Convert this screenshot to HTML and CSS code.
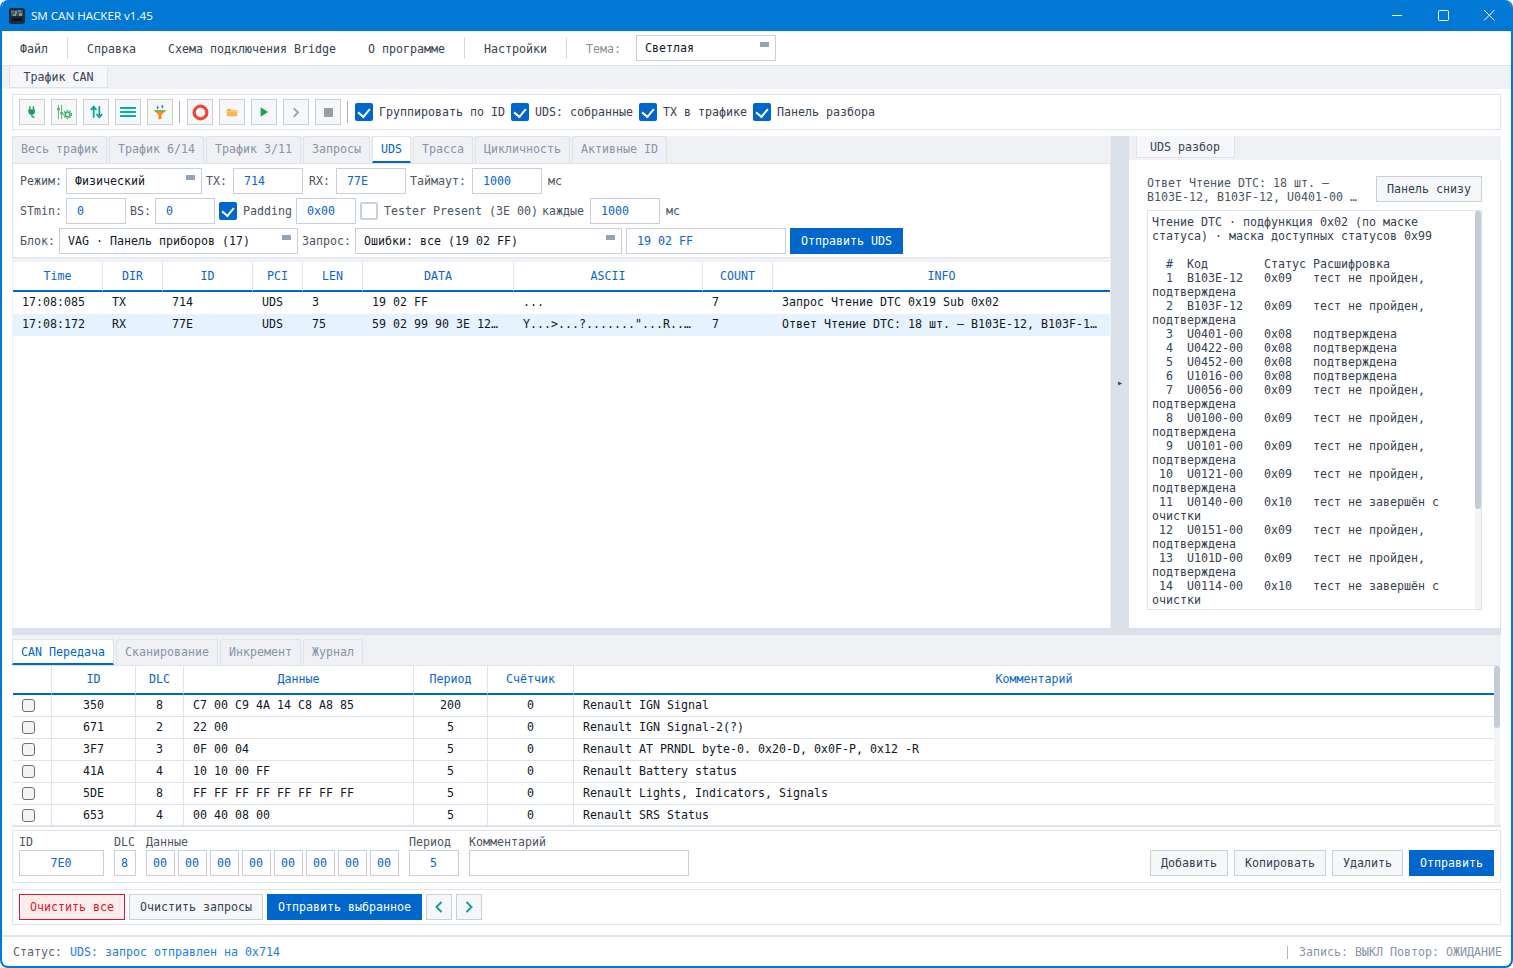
FILE: index.html
```html
<!DOCTYPE html>
<html lang="ru">
<head>
    <meta charset="UTF-8">
    <title>SM CAN HACKER v1.45</title>
    <link rel="stylesheet" href="styles.css">
</head>
<body>
    <div class="window">
        <!-- Title bar -->
        <div class="titlebar">
            <svg class="logo" width="16" height="16" viewBox="0 0 16 16">
                <rect width="16" height="16" rx="3" fill="#1c2a3d"/>
                <rect x="2" y="2" width="12" height="6" fill="#37507a"/>
                <rect x="2" y="3" width="3" height="2" fill="#c0483c"/>
                <rect x="6" y="3" width="2" height="3" fill="#4caf62"/>
                <rect x="9" y="2" width="3" height="2" fill="#3f8fd8"/>
                <rect x="4" y="6" width="3" height="2" fill="#58b368"/>
                <rect x="10" y="5" width="3" height="3" fill="#b58b3c"/>
                <rect x="3" y="10" width="10" height="3" rx="1" fill="#0d1522"/>
            </svg>
            <span class="app-title">SM CAN HACKER v1.45</span>
            <div class="caption">
                <svg width="46" height="31" viewBox="0 0 46 31"><path d="M18 15.5h10" stroke="#fff" fill="none"/></svg>
                <svg width="46" height="31" viewBox="0 0 46 31"><rect x="18.500" y="10.500" width="10" height="10" rx="1" stroke="#fff" fill="none"/></svg>
                <svg width="46" height="31" viewBox="0 0 46 31"><path d="M18 10l10.500 10.500M28.500 10L18 20.500" stroke="#fff" fill="none"/></svg>
            </div>
        </div>

        <!-- Menu -->
        <div class="menubar">
            <span class="menu-item m-file">Файл</span>
            <span class="menu-sep"></span>
            <span class="menu-item m-help">Справка</span>
            <span class="menu-item m-bridge">Схема подключения Bridge</span>
            <span class="menu-item m-about">О программе</span>
            <span class="menu-sep"></span>
            <span class="menu-item m-settings">Настройки</span>
            <span class="menu-sep"></span>
            <span class="menu-label">Тема:</span>
            <div class="combo w-theme"><span>Светлая</span><i></i></div>
        </div>

        <div class="page-tabs">
            <div class="page-tab">Трафик CAN</div>
        </div>

        <div class="main">
            <!-- Toolbar -->
            <div class="panel toolbar">
                <button class="tool"><svg width="10" height="14" viewBox="0 0 14 18"><path d="M4 1v4M9 1v4" stroke="#17a05d" stroke-width="2" fill="none"/><path d="M2 5h9v4a4 4 0 0 1-3 4H5a4 4 0 0 1-3-4z" fill="#17a05d"/><path d="M6.500 13c0 3 2 3.500 4 3.500" stroke="#17a05d" stroke-width="1.800" fill="none"/></svg></button>
                <button class="tool"><svg width="16" height="16" viewBox="0 0 20 20"><path d="M3 1v18M7 1v18" stroke="#5dbb7a" stroke-width="1.300" fill="none"/><rect x="1.500" y="5" width="3" height="3" fill="#3fae66"/><rect x="5.500" y="10" width="3" height="3" fill="#3fae66"/><circle cx="14.500" cy="13" r="3" fill="none" stroke="#3fae66" stroke-width="2"/><circle cx="14.500" cy="13" r="5" fill="none" stroke="#3fae66" stroke-width="1.400" stroke-dasharray="1.800 1.800"/></svg></button>
                <button class="tool"><svg width="13" height="14" viewBox="0 0 16 16"><path d="M4.500 15V2M1 5.500l3.500-4 3.500 4M11.500 1v13M8 10.500l3.500 4 3.500-4" stroke="#0ea593" stroke-width="2.200" fill="none"/></svg></button>
                <button class="tool"><svg width="16" height="10" viewBox="0 0 16 10"><path d="M0 1h16M0 5h16M0 9h16" stroke="#12ad9a" stroke-width="1.800" fill="none"/></svg></button>
                <button class="tool"><svg width="14" height="17" viewBox="0 0 18 20"><path d="M6 1v4M4.500 3.500L6 5l1.500-1.500M12 5V1M10.500 2.500L12 1l1.500 1.500" stroke="#1f6fd0" stroke-width="1.200" fill="none"/><path d="M1 7h16l-6 6v5l-4 1v-6z" fill="#f58a1f"/><path d="M1 7h16l-2 2H3z" fill="#6fae5f"/></svg></button>
                <span class="tool-sep"></span>
                <button class="tool"><svg width="17" height="17" viewBox="0 0 18 18"><circle cx="9" cy="9" r="6.700" fill="none" stroke="#f2463a" stroke-width="3.400"/></svg></button>
                <button class="tool"><svg width="12" height="9" viewBox="0 0 16 12"><path d="M1 1h5l1.500 2H15v8H1z" fill="#f8b653"/><path d="M1 4h14v1H1z" fill="#fbd08b"/></svg></button>
                <button class="tool"><svg width="8" height="10" viewBox="0 0 12 14"><path d="M1 0l11 7-11 7z" fill="#16a34a"/></svg></button>
                <button class="tool"><svg width="8" height="11" viewBox="0 0 12 16"><path d="M2.500 1.500L9 8l-6.500 6.500" stroke="#a3a7ad" stroke-width="3" fill="none"/></svg></button>
                <button class="tool"><svg width="9" height="9" viewBox="0 0 10 10"><rect width="10" height="10" rx="1" fill="#9c9c9c"/></svg></button>
                <span class="tool-sep"></span>
                <label class="chk on"></label><span class="chk-text t-group">Группировать по ID</span>
                <label class="chk on"></label><span class="chk-text t-uds">UDS: собранные</span>
                <label class="chk on"></label><span class="chk-text t-tx">TX в трафике</span>
                <label class="chk on"></label><span class="chk-text">Панель разбора</span>
            </div>

            <!-- Upper split -->
            <div class="split">
                <div class="left-pane">
                    <div class="tabs">
                        <div class="tab">Весь трафик</div>
                        <div class="tab">Трафик 6/14</div>
                        <div class="tab">Трафик 3/11</div>
                        <div class="tab">Запросы</div>
                        <div class="tab active">UDS</div>
                        <div class="tab">Трасса</div>
                        <div class="tab">Цикличность</div>
                        <div class="tab">Активные ID</div>
                    </div>
                    <div class="uds-form">
                        <div class="form-row">
                            <span class="lbl">Режим:</span>
                            <div class="combo w-mode"><span>Физический</span><i></i></div>
                            <span class="lbl">TX:</span><span class="field f70 ml2">714</span>
                            <span class="lbl ml2">RX:</span><span class="field f70 ml2">77E</span>
                            <span class="lbl">Таймаут:</span><span class="field f70 ml2">1000</span>
                            <span class="lbl ml2">мс</span>
                        </div>
                        <div class="form-row">
                            <span class="lbl">STmin:</span><span class="field f60">0</span>
                            <span class="lbl">BS:</span><span class="field f60">0</span>
                            <label class="chk on"></label><span class="lbl ml2">Padding</span>
                            <span class="field f60">0x00</span>
                            <label class="chk"></label><span class="lbl ml2">Tester Present (3E 00)<span class="every"> каждые</span></span>
                            <span class="field f70 ml2">1000</span>
                            <span class="lbl ml2">мс</span>
                        </div>
                        <div class="form-row">
                            <span class="lbl">Блок:</span>
                            <div class="combo w-block"><span>VAG · Панель приборов (17)</span><i></i></div>
                            <span class="lbl">Запрос:</span>
                            <div class="combo w-query"><span>Ошибки: все (19 02 FF)</span><i></i></div>
                            <span class="field f160">19 02 FF</span>
                            <button class="btn primary w-send-uds">Отправить UDS</button>
                        </div>
                    </div>
                    <div class="traffic-wrap">
                        <table class="grid traffic">
                            <colgroup>
                                <col class="c90"><col class="c60"><col class="c90"><col class="c50"><col class="c60"><col class="c151"><col class="c189"><col class="c70"><col class="c337">
                            </colgroup>
                            <thead>
                                <tr><th>Time</th><th>DIR</th><th>ID</th><th>PCI</th><th>LEN</th><th>DATA</th><th>ASCII</th><th>COUNT</th><th>INFO</th></tr>
                            </thead>
                            <tbody>
                                <tr><td>17:08:085</td><td>TX</td><td>714</td><td>UDS</td><td>3</td><td>19 02 FF</td><td>...</td><td>7</td><td>Запрос Чтение DTC 0x19 Sub 0x02</td></tr>
                                <tr class="selected"><td>17:08:172</td><td>RX</td><td>77E</td><td>UDS</td><td>75</td><td>59 02 99 90 3E 12…</td><td>Y...&gt;...?......."...R..…</td><td>7</td><td>Ответ Чтение DTC: 18 шт. — B103E-12, B103F-1…</td></tr>
                            </tbody>
                        </table>
                    </div>
                </div>

                <div class="v-splitter"><span>▸</span></div>

                <div class="right-pane">
                    <div class="right-tabs"><div class="right-tab">UDS разбор</div></div>
                    <div class="right-body">
                        <div class="summary">
                            <div class="summary-text">Ответ Чтение DTC: 18 шт. —<br>B103E-12, B103F-12, U0401-00 …</div>
                            <button class="btn w-panel">Панель снизу</button>
                        </div>
                        <div class="decode">
<pre class="decode-text">Чтение DTC · подфункция 0x02 (по маске
статуса) · маска доступных статусов 0x99

  #  Код        Статус Расшифровка
  1  B103E-12   0x09   тест не пройден,
подтверждена
  2  B103F-12   0x09   тест не пройден,
подтверждена
  3  U0401-00   0x08   подтверждена
  4  U0422-00   0x08   подтверждена
  5  U0452-00   0x08   подтверждена
  6  U1016-00   0x08   подтверждена
  7  U0056-00   0x09   тест не пройден,
подтверждена
  8  U0100-00   0x09   тест не пройден,
подтверждена
  9  U0101-00   0x09   тест не пройден,
подтверждена
 10  U0121-00   0x09   тест не пройден,
подтверждена
 11  U0140-00   0x10   тест не завершён с
очистки
 12  U0151-00   0x09   тест не пройден,
подтверждена
 13  U101D-00   0x09   тест не пройден,
подтверждена
 14  U0114-00   0x10   тест не завершён с
очистки</pre>
                            <div class="scroll decode-scroll"><div class="thumb"></div></div>
                        </div>
                    </div>
                </div>
            </div>

            <div class="h-splitter"></div>

            <!-- Lower tabs -->
            <div class="tabs lower-tabs">
                <div class="tab active">CAN Передача</div>
                <div class="tab">Сканирование</div>
                <div class="tab">Инкремент</div>
                <div class="tab">Журнал</div>
            </div>
            <div class="tx-wrap">
                <table class="grid tx">
                    <colgroup>
                        <col class="c39"><col class="c84"><col class="c48"><col class="c230"><col class="c74"><col class="c86"><col>
                    </colgroup>
                    <thead>
                        <tr><th></th><th>ID</th><th>DLC</th><th>Данные</th><th>Период</th><th>Счётчик</th><th>Комментарий</th></tr>
                    </thead>
                    <tbody>
                        <tr><td class="pick"><span class="row-check"></span></td><td class="mid">350</td><td class="mid">8</td><td>C7 00 C9 4A 14 C8 A8 85</td><td class="mid">200</td><td class="mid">0</td><td>Renault IGN Signal</td></tr>
                        <tr><td class="pick"><span class="row-check"></span></td><td class="mid">671</td><td class="mid">2</td><td>22 00</td><td class="mid">5</td><td class="mid">0</td><td>Renault IGN Signal-2(?)</td></tr>
                        <tr><td class="pick"><span class="row-check"></span></td><td class="mid">3F7</td><td class="mid">3</td><td>0F 00 04</td><td class="mid">5</td><td class="mid">0</td><td>Renault AT PRNDL byte-0. 0x20-D, 0x0F-P, 0x12 -R</td></tr>
                        <tr><td class="pick"><span class="row-check"></span></td><td class="mid">41A</td><td class="mid">4</td><td>10 10 00 FF</td><td class="mid">5</td><td class="mid">0</td><td>Renault Battery status</td></tr>
                        <tr><td class="pick"><span class="row-check"></span></td><td class="mid">5DE</td><td class="mid">8</td><td>FF FF FF FF FF FF FF FF</td><td class="mid">5</td><td class="mid">0</td><td>Renault Lights, Indicators, Signals</td></tr>
                        <tr><td class="pick"><span class="row-check"></span></td><td class="mid">653</td><td class="mid">4</td><td>00 40 08 00</td><td class="mid">5</td><td class="mid">0</td><td>Renault SRS Status</td></tr>
                    </tbody>
                </table>
                <div class="scroll tx-scroll"><div class="thumb"></div></div>
            </div>

            <!-- Frame editor -->
            <div class="panel editor">
                <div class="ed-group">
                    <span class="ed-label">ID</span>
                    <span class="field center e85">7E0</span>
                </div>
                <div class="ed-group">
                    <span class="ed-label">DLC</span>
                    <span class="field center e22">8</span>
                </div>
                <div class="ed-group">
                    <span class="ed-label">Данные</span>
                    <div class="bytes">
                        <span class="field center e29">00</span>
                        <span class="field center e29">00</span>
                        <span class="field center e29">00</span>
                        <span class="field center e29">00</span>
                        <span class="field center e29">00</span>
                        <span class="field center e29">00</span>
                        <span class="field center e29">00</span>
                        <span class="field center e29">00</span>
                    </div>
                </div>
                <div class="ed-group">
                    <span class="ed-label">Период</span>
                    <span class="field center e50">5</span>
                </div>
                <div class="ed-group">
                    <span class="ed-label">Комментарий</span>
                    <span class="field e220"></span>
                </div>
                <div class="ed-buttons">
                    <button class="btn w-add">Добавить</button>
                    <button class="btn w-copy">Копировать</button>
                    <button class="btn w-del">Удалить</button>
                    <button class="btn primary w-tx">Отправить</button>
                </div>
            </div>

            <!-- Actions -->
            <div class="panel actions">
                <button class="btn danger w-clear">Очистить все</button>
                <button class="btn w-clear-req">Очистить запросы</button>
                <button class="btn primary w-send-sel">Отправить выбранное</button>
                <button class="btn nav"><svg width="10" height="12" viewBox="0 0 10 12"><path d="M7.500 1L2.500 6l5 5" stroke="#0ea593" stroke-width="2" fill="none"/></svg></button>
                <button class="btn nav"><svg width="10" height="12" viewBox="0 0 10 12"><path d="M2.500 1l5 5-5 5" stroke="#0ea593" stroke-width="2" fill="none"/></svg></button>
            </div>
        </div>

        <!-- Status -->
        <div class="statusbar">
            <span class="st-label">Статус:</span>
            <span class="st-value">UDS: запрос отправлен на 0x714</span>
            <span class="st-right">Запись: ВЫКЛ Повтор: ОЖИДАНИЕ</span>
        </div>
    </div>
</body>
</html>
```

FILE: styles.css
```css
* {
    margin: 0;
    padding: 0;
    box-sizing: border-box;
}

body {
    font-family: 'DejaVu Sans Mono', 'Liberation Mono', monospace;
    font-size: 11.63px;
    color: #1f2937;
    background: #fff;
    overflow: hidden;
}

button {
    font: inherit;
    cursor: default;
}

.window {
    width: 1513px;
    height: 968px;
    display: flex;
    flex-direction: column;
    background: #fff;
    border: 2px solid #0078d4;
    border-top: 0;
    border-radius: 8px;
    overflow: hidden;
}

/* title bar */
.titlebar {
    height: 31px;
    margin: 0 -2px;
    flex: none;
    display: flex;
    align-items: center;
    padding-left: 9px;
    background: #0078d4;
    color: #fff;
}

.logo {
    margin-right: 6px;
}

.app-title {
    font-family: 'Open Sans', 'Noto Sans', sans-serif;
    font-size: 11.6px;
}

.caption {
    margin-left: auto;
    margin-right: 1px;
    display: flex;
}

/* menu */
.menubar {
    height: 35px;
    flex: none;
    display: flex;
    align-items: center;
    border-bottom: 1px solid #dfe3ea;
    color: #374151;
}

.menu-item {
    padding-top: 2px;
}

.m-file { margin-left: 18px; }
.m-help { margin-left: 19px; }
.m-bridge { margin-left: 32px; }
.m-about { margin-left: 32px; }
.m-settings { margin-left: 19px; }

.menu-sep {
    width: 1px;
    height: 21px;
    margin-left: 19px;
    background: #d3d8e0;
}

.menu-label {
    margin-left: 19px;
    padding-top: 2px;
    color: #8b8f96;
}

.combo {
    height: 26px;
    display: flex;
    justify-content: space-between;
    padding: 0 6px 0 8px;
    line-height: 24px;
    background: #fff;
    border: 1px solid #c8d0dc;
    color: #111827;
}

.combo i {
    width: 9px;
    height: 5px;
    margin-top: 6px;
    background: #94a3b8;
}

.w-theme { width: 140px; margin-left: 15px; }
.w-mode { width: 136px; }
.w-block { width: 239px; }
.w-query { width: 267px; }

.page-tabs {
    height: 23px;
    flex: none;
    padding-left: 7px;
    background: #eff1f5;
}

.page-tab {
    width: 99px;
    height: 22px;
    line-height: 23px;
    text-align: center;
    background: #f6f7fa;
    border: 1px solid #dfe3ea;
    border-top: 0;
    color: #374151;
}

.main {
    flex: 1;
    padding: 5px 10px 0;
    display: flex;
    flex-direction: column;
}

.panel {
    background: #fff;
    border: 1px solid #dfe3ea;
    display: flex;
}

/* toolbar */
.toolbar {
    height: 36px;
    flex: none;
    align-items: center;
    padding-left: 6px;
}

.tool {
    width: 26px;
    height: 26px;
    margin-right: 6px;
    display: flex;
    align-items: center;
    justify-content: center;
    background: #f6f7f9;
    border: 1px solid #c8d0dc;
}

.tool-sep {
    width: 1px;
    height: 22px;
    margin-right: 7px;
    background: #a9adb3;
}

.chk {
    width: 18px;
    height: 18px;
    flex: none;
    display: block;
    position: relative;
    background: #fff;
    border: 2px solid #c8d0dc;
    border-radius: 2px;
}

.chk.on {
    background: #0066cc;
    border-color: #0066cc;
}

.chk.on::after {
    content: "";
    position: absolute;
    left: 3px;
    top: 1px;
    width: 6px;
    height: 9px;
    border: solid #fff;
    border-width: 0 2px 2px 0;
    transform: rotate(40deg);
}

.chk-text {
    margin-left: 6px;
    color: #374151;
}

.t-group { margin-right: 6px; }
.t-uds { margin-right: 6px; }
.t-tx { margin-right: 6px; }

/* upper split */
.split {
    height: 492px;
    flex: none;
    margin-top: 6px;
    display: flex;
}

.left-pane {
    width: 1099px;
    display: flex;
    flex-direction: column;
    background: #eff1f5;
}

.tabs {
    height: 27px;
    flex: none;
    display: flex;
    gap: 2px;
    background: #eff1f5;
}

.tab {
    padding: 0 8px;
    line-height: 24px;
    white-space: nowrap;
    color: #8a94a6;
    background: #eff1f5;
    border: 1px solid #dfe3ea;
    border-bottom: 0;
    border-radius: 3px 3px 0 0;
}

.tab.active {
    color: #0066cc;
    background: #fff;
    border-bottom: 2px solid #0066cc;
}

.uds-form {
    height: 95px;
    flex: none;
    padding: 4px 0 0 7px;
    display: flex;
    flex-direction: column;
    gap: 4px;
    background: #fff;
    border: 1px solid #dfe3ea;
}

.form-row {
    height: 26px;
    display: flex;
    align-items: center;
    gap: 4px;
}

.lbl {
    color: #4b5563;
    white-space: nowrap;
}

.every {
    margin-left: -3px;
}

.ml2 { margin-left: 2px; }

.field {
    height: 26px;
    flex: none;
    display: block;
    padding-left: 10px;
    line-height: 24px;
    color: #0a66c8;
    background: #fff;
    border: 1px solid #c8d0dc;
}

.center {
    padding: 0 1px 0 0;
    text-align: center;
}

.f60 { width: 60px; }
.f70 { width: 70px; }
.f160 { width: 160px; }

.btn {
    height: 26px;
    flex: none;
    color: #374151;
    background: #f6f7f9;
    border: 1px solid #c8d0dc;
}

.btn.primary {
    color: #fff;
    background: #0066cc;
    border-color: #0066cc;
}

.btn.danger {
    color: #d9182d;
    background: #fdecec;
    border-color: #d9182d;
}

.btn.nav {
    width: 26px;
    display: flex;
    align-items: center;
    justify-content: center;
}

.w-send-uds { width: 113px; }

/* tables */
.traffic-wrap {
    flex: 1;
    margin: 4px 1px 0;
    background: #fff;
}

.grid {
    border-collapse: separate;
    border-spacing: 0;
    table-layout: fixed;
}

.grid th {
    padding-bottom: 1px;
    font-weight: normal;
    color: #0a66c8;
    text-align: center;
    border-right: 1px solid #dfe3ea;
    border-bottom: 2px solid #0066cc;
}

.grid td {
    height: 22px;
    padding: 0 0 2px 9px;
    white-space: nowrap;
    overflow: hidden;
    color: #111827;
}

.traffic {
    width: 1097px;
}

.traffic th {
    height: 30px;
}

.traffic th:last-child,
.tx th:last-child {
    border-right: 0;
}

.traffic .selected td {
    background: #e6f2fd;
}

.c39 { width: 39px; }
.c48 { width: 48px; }
.c50 { width: 50px; }
.c60 { width: 60px; }
.c70 { width: 70px; }
.c74 { width: 74px; }
.c84 { width: 84px; }
.c86 { width: 86px; }
.c90 { width: 90px; }
.c151 { width: 151px; }
.c189 { width: 189px; }
.c230 { width: 230px; }
.c337 { width: 337px; }

.v-splitter {
    width: 18px;
    flex: none;
    display: flex;
    align-items: center;
    justify-content: center;
    background: #dce0e8;
    color: #3f4650;
    font-size: 10px;
}

/* right pane */
.right-pane {
    flex: 1;
    display: flex;
    flex-direction: column;
}

.right-tabs {
    height: 24px;
    flex: none;
    padding-left: 7px;
    background: #eff1f5;
}

.right-tab {
    width: 99px;
    height: 22px;
    padding-left: 13px;
    line-height: 22px;
    color: #374151;
    background: #f6f7fa;
    border: 1px solid #dfe3ea;
    border-top: 0;
}

.right-body {
    flex: 1;
    padding: 16px 18px 0;
    background: #fff;
    border-right: 1px solid #dfe3ea;
}

.summary {
    height: 34px;
    display: flex;
    justify-content: space-between;
}

.summary-text {
    line-height: 14px;
    color: #4b5563;
}

.w-panel { width: 106px; }

.decode {
    width: 335px;
    height: 400px;
    display: flex;
    overflow: hidden;
    border: 1px solid #dfe3ea;
}

.decode-text {
    width: 327px;
    flex: none;
    padding: 4px 0 0 4px;
    font: inherit;
    line-height: 14px;
    color: #374151;
}

.scroll {
    flex: none;
    background: #f3f4f6;
}

.thumb {
    background: #c4ccd8;
    border-radius: 3px;
}

.decode-scroll { width: 6px; }
.decode-scroll .thumb { height: 298px; }

.h-splitter {
    height: 7px;
    flex: none;
    background: #dce0e8;
}

/* lower tabs and send table */
.lower-tabs {
    height: 30px;
    padding-top: 4px;
}

.lower-tabs .tab {
    line-height: 25px;
}

.tx-wrap {
    height: 162px;
    flex: none;
    display: flex;
    padding-left: 1px;
    overflow: hidden;
    background: #fff;
    border-top: 1px solid #dfe3ea;
    border-bottom: 2px solid #dfe3ea;
}

.tx {
    width: 1481px;
    flex: none;
    align-self: flex-start;
}

.tx th {
    height: 29px;
}

.tx td {
    border-right: 1px solid #dfe3ea;
    border-bottom: 1px solid #dfe3ea;
}

.tx td:last-child {
    border-right: 0;
}

.tx td.mid {
    padding: 0 0 2px;
    text-align: center;
}

.tx td.pick {
    padding-bottom: 0;
}

.row-check {
    display: block;
    width: 13px;
    height: 13px;
    background: #f4f4f4;
    border: 1px solid #6f6f6f;
    border-radius: 3px;
}

.tx-scroll { width: 6px; }
.tx-scroll .thumb { height: 62px; }

/* frame editor */
.editor {
    height: 53px;
    flex: none;
    margin-top: 3px;
    padding: 4px 6px 0;
    gap: 10px;
}

.ed-group {
    display: flex;
    flex-direction: column;
}

.ed-label {
    height: 15px;
    line-height: 15px;
    color: #4b5563;
    white-space: nowrap;
}

.bytes {
    display: flex;
    gap: 3px;
}

.e22 { width: 22px; }
.e29 { width: 29px; }
.e50 { width: 50px; }
.e85 { width: 85px; }
.e220 { width: 220px; }

.ed-buttons {
    margin-left: auto;
    padding-top: 15px;
    display: flex;
    gap: 6px;
}

.w-add { width: 78px; }
.w-copy { width: 92px; }
.w-del { width: 71px; }
.w-tx { width: 85px; }

/* actions */
.actions {
    height: 36px;
    flex: none;
    margin-top: 6px;
    padding-left: 6px;
    align-items: center;
    gap: 4px;
}

.w-clear { width: 106px; }
.w-clear-req { width: 134px; }
.w-send-sel { width: 155px; }

/* status */
.statusbar {
    height: 31px;
    flex: none;
    display: flex;
    align-items: center;
    padding: 0 9px 0 11px;
    border-top: 2px solid #dfe3ea;
}

.st-label { color: #5b6472; }

.st-value {
    margin-left: 8px;
    color: #1a80e0;
}

.st-right {
    margin-left: auto;
    margin-top: 1px;
    padding-left: 11px;
    line-height: 13px;
    color: #8a94a6;
    border-left: 1px solid #b4b9c1;
}
```
